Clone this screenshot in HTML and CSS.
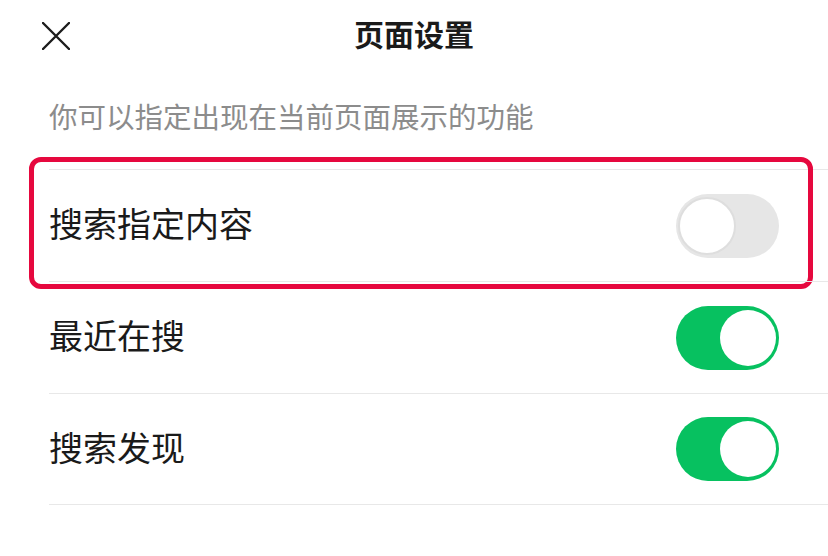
FILE: index.html
```html
<!DOCTYPE html>
<html lang="zh-CN">
<head>
<meta charset="utf-8">
<title>页面设置</title>
<link rel="stylesheet" href="styles.css">
</head>
<body>
<div class="page">
  <header class="header">
    <div class="close">
      <svg width="28" height="28" viewBox="0 0 28 28" aria-hidden="true">
        <path d="M1 1 L27 27 M27 1 L1 27" stroke="#1c1c1c" stroke-width="2.4" stroke-linecap="round" fill="none"/>
      </svg>
    </div>
    <h1 class="title">页面设置</h1>
    <div class="spacer"></div>
  </header>
  <p class="subtitle">你可以指定出现在当前页面展示的功能</p>
  <ul class="list">
    <li class="row row-highlight">
      <span class="label">搜索指定内容</span>
      <span class="switch switch-off"><span class="knob"></span></span>
      <span class="highlight"></span>
    </li>
    <li class="row">
      <span class="label">最近在搜</span>
      <span class="switch switch-on"><span class="knob"></span></span>
    </li>
    <li class="row">
      <span class="label">搜索发现</span>
      <span class="switch switch-on"><span class="knob"></span></span>
    </li>
  </ul>
</div>
</body>
</html>
```

FILE: styles.css
```css
* { box-sizing: border-box; }
html, body {
  margin: 0;
  padding: 0;
  background: #ffffff;
}
body {
  font-family: "Noto Sans CJK SC", "Noto Sans", sans-serif;
  color: #1a1a1a;
}
.page {
  width: 828px;
  height: 556px;
  overflow: hidden;
}
.header {
  display: grid;
  grid-template-columns: 1fr auto 1fr;
  align-items: center;
  height: 72px;
}
.close {
  padding-left: 42px;
  display: flex;
  align-items: center;
}
.close svg { display: block; }
.title {
  margin: 0;
  align-self: start;
  font-size: 30px;
  font-weight: 700;
  line-height: 66px;
  color: #1a1a1a;
}
.subtitle {
  margin: 0;
  padding: 26px 0 35px 49px;
  font-size: 28.5px;
  line-height: 36px;
  color: #8c8c8c;
}
.list {
  list-style: none;
  margin: 0;
  padding: 0;
}
.row {
  position: relative;
  display: flex;
  align-items: center;
  justify-content: space-between;
  height: 112px;
  margin-left: 49px;
  padding-right: 49px;
  border-top: 1px solid #e8e8e8;
}
.row:last-child {
  border-bottom: 1px solid #e8e8e8;
}
.label {
  font-size: 34px;
  line-height: 40px;
  padding-bottom: 5px;
  color: #1a1a1a;
}
.switch {
  position: relative;
  display: block;
  width: 103px;
  height: 64px;
  border-radius: 32px;
}
.switch-on { background: #07c160; }
.switch-off { background: #e6e6e6; }
.knob {
  position: absolute;
  top: 4px;
  width: 56px;
  height: 56px;
  border-radius: 50%;
  background: #ffffff;
}
.switch-on .knob { right: 3px; }
.switch-off .knob {
  left: 2px;
  top: 3px;
  width: 58px;
  height: 58px;
  border: 2px solid #dedede;
}
.highlight {
  position: absolute;
  left: -20px;
  top: -13px;
  right: 15px;
  bottom: -8px;
  border: 5px solid #e6083e;
  border-radius: 12px;
  pointer-events: none;
}
```
